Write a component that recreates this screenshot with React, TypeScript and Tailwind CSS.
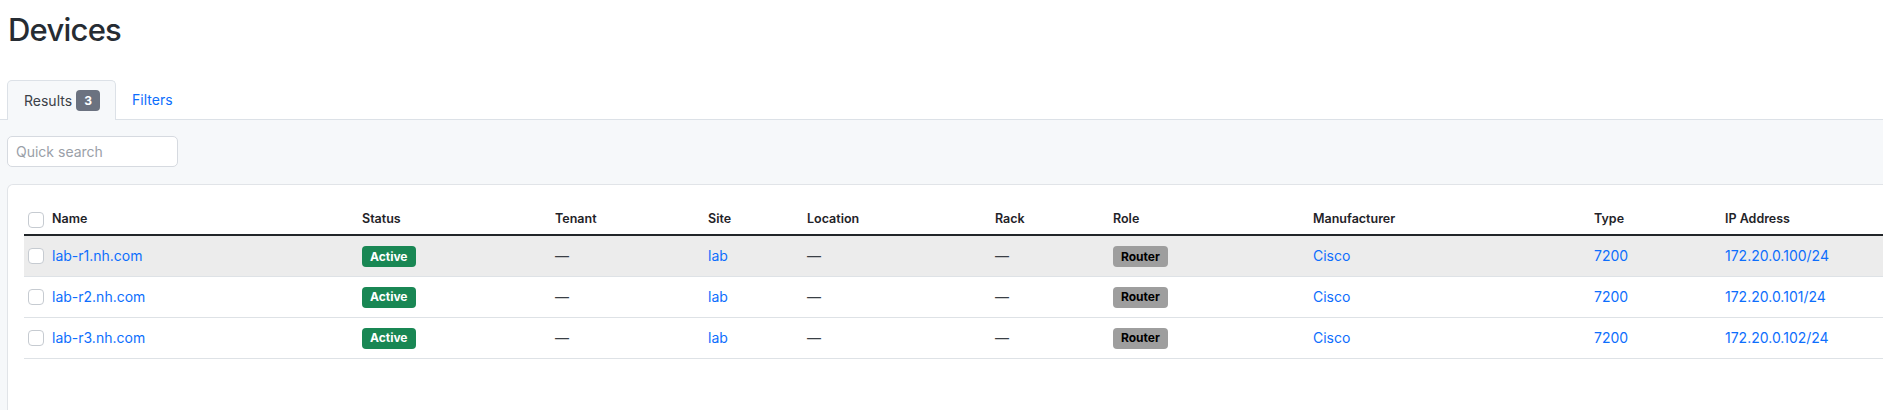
const columns = [
  { label: "Name", w: "w-[310px]" },
  { label: "Status", w: "w-[193px]" },
  { label: "Tenant", w: "w-[153px]" },
  { label: "Site", w: "w-[99px]" },
  { label: "Location", w: "w-[188px]" },
  { label: "Rack", w: "w-[118px]" },
  { label: "Role", w: "w-[200px]" },
  { label: "Manufacturer", w: "w-[281px]" },
  { label: "Type", w: "w-[131px]" },
  { label: "IP Address", w: "w-[250px]" },
];

const devices = [
  { name: "lab-r1.nh.com", ip: "172.20.0.100/24" },
  { name: "lab-r2.nh.com", ip: "172.20.0.101/24" },
  { name: "lab-r3.nh.com", ip: "172.20.0.102/24" },
];

function Checkbox() {
  return <span className="block h-4 w-4 rounded-[4px] border border-[#c6cbd1] bg-white" />;
}

function Dash() {
  return <span className="text-[#3a3f45]">—</span>;
}

export default function App() {
  return (
    <div className="min-h-screen overflow-hidden bg-white font-['Inter',sans-serif] text-[14px] text-[#212529]">
      <div className="px-2 pt-[14px]">
        <h1 className="text-[31px] leading-none font-medium tracking-tight text-[#262c33]">Devices</h1>
      </div>

      <div className="mt-[35px] flex border-b border-[#dce1e7] px-[7px]">
        <div className="-mb-px flex h-[40px] items-center rounded-t-[5px] border border-b-0 border-[#dce1e7] bg-[#f6f8fa] pr-[15px] pl-4 text-[#3b4148]">
          Results
          <span className="ml-1 flex h-[21px] w-6 items-center justify-center rounded-[4px] bg-[#6b7280] text-[12px] font-bold text-white">
            3
          </span>
        </div>
        <div className="flex h-[39px] items-center px-[16px] text-[#0d6efd]">Filters</div>
      </div>

      <div className="bg-[#f6f8fa] px-[7px] pt-4">
        <div className="flex h-[31px] w-[171px] items-center rounded-[5px] border border-[#d6dae0] bg-white px-2 text-[#9aa0a8]">
          Quick search
        </div>

        <div className="mt-[17px] w-[2000px] rounded-t-md border border-b-0 border-[#e1e4e8] bg-white px-4 pt-[20px] pb-16">
          <table className="table-fixed border-collapse text-left">
            <thead>
              <tr className="h-[30px] border-b-2 border-[#212529]">
                <th className="w-[20px] pl-1">
                  <Checkbox />
                </th>
                {columns.map((c) => (
                  <th key={c.label} className={`${c.w} pl-2 text-[12.5px] font-semibold text-[#1f2328]`}>
                    {c.label}
                  </th>
                ))}
              </tr>
            </thead>
            <tbody>
              {devices.map((d, i) => (
                <tr key={d.name} className={`h-[41px] border-b border-[#dee2e6] ${i === 0 ? "bg-[#ececec]" : ""}`}>
                  <td className="pl-1">
                    <Checkbox />
                  </td>
                  <td className="pl-2 text-[#0d6efd]">{d.name}</td>
                  <td className="pl-2">
                    <span className="inline-flex h-[21px] items-center rounded-[4px] bg-[#198754] px-2 text-[12px] font-bold text-white">
                      Active
                    </span>
                  </td>
                  <td className="pl-2">
                    <Dash />
                  </td>
                  <td className="pl-2 text-[#0d6efd]">lab</td>
                  <td className="pl-2">
                    <Dash />
                  </td>
                  <td className="pl-2">
                    <Dash />
                  </td>
                  <td className="pl-2">
                    <span className="inline-flex h-[21px] items-center rounded-[4px] bg-[#9e9e9e] px-2 text-[12px] font-bold text-black">
                      Router
                    </span>
                  </td>
                  <td className="pl-2 text-[#0d6efd]">Cisco</td>
                  <td className="pl-2 text-[#0d6efd]">7200</td>
                  <td className="pl-2 text-[#0d6efd]">{d.ip}</td>
                </tr>
              ))}
            </tbody>
          </table>
        </div>
      </div>
    </div>
  );
}
